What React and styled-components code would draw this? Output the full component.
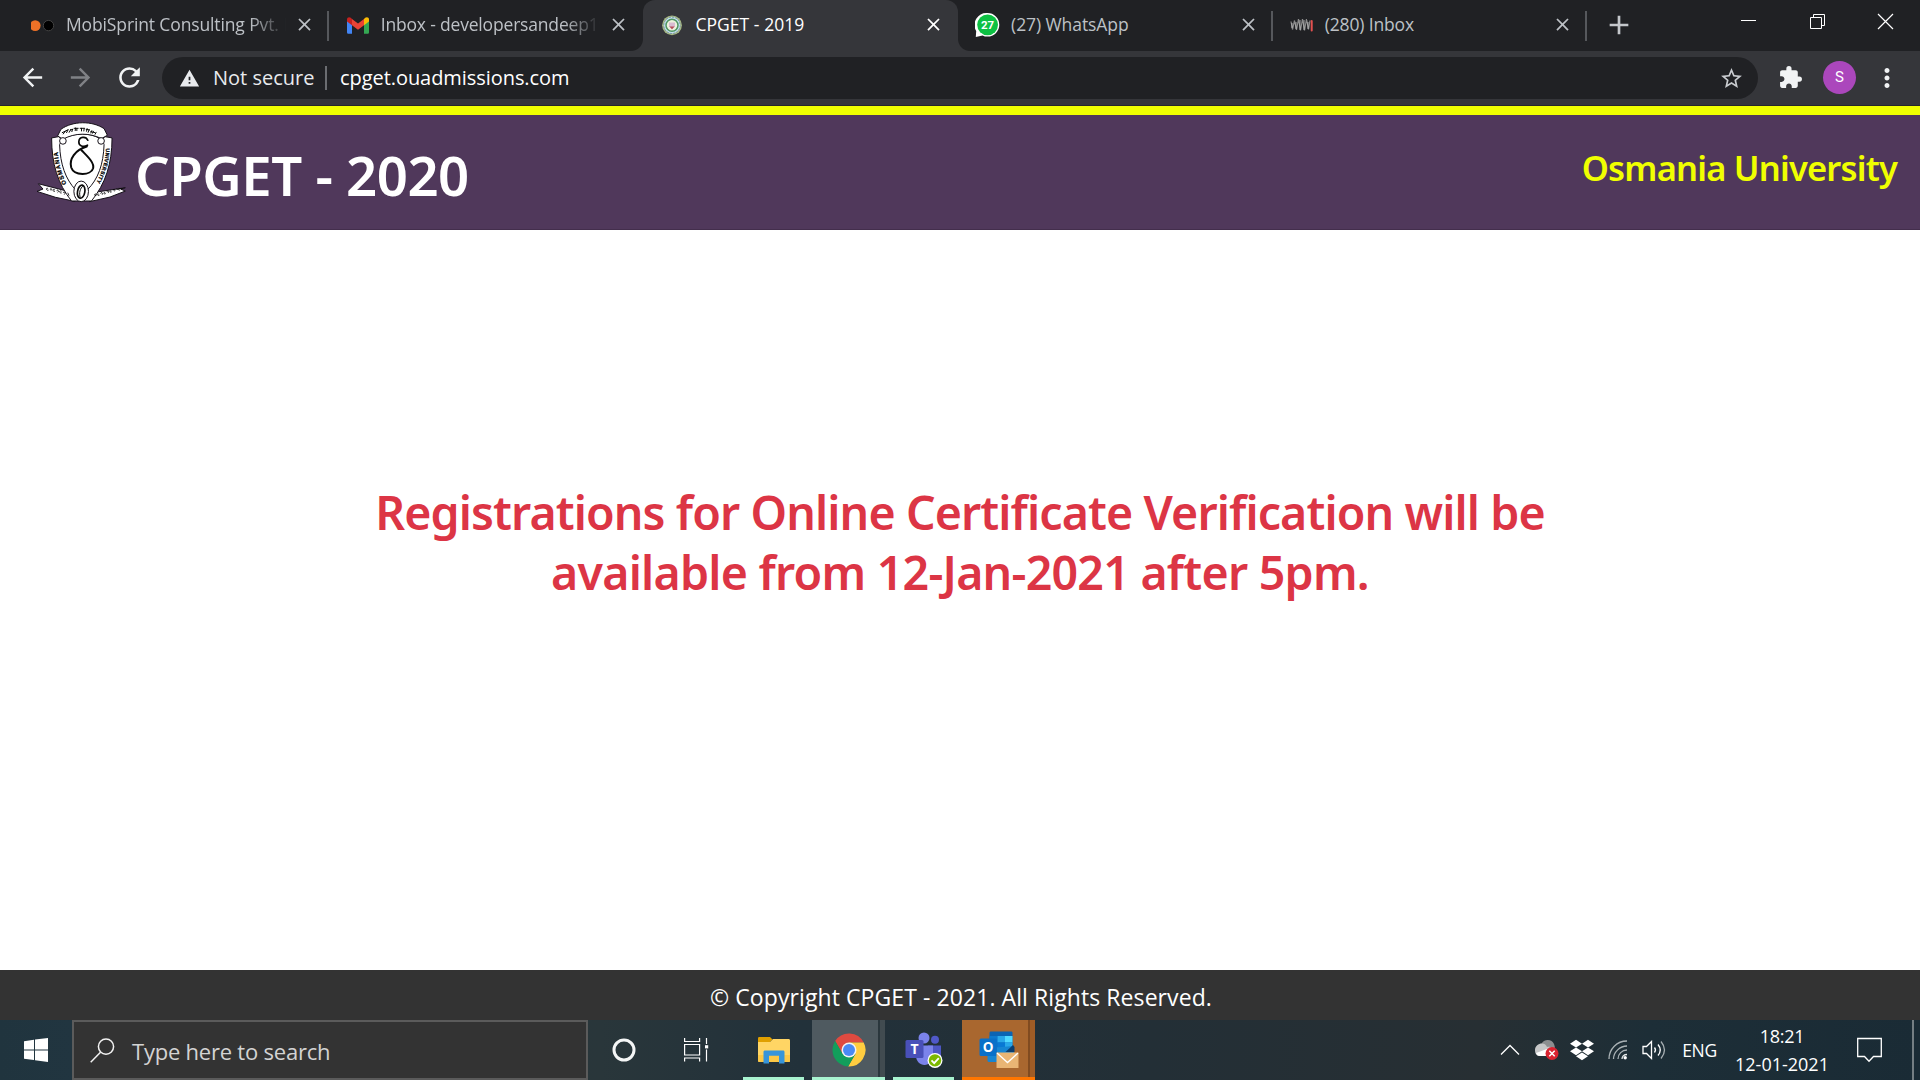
import React from 'react';
import styled, { createGlobalStyle, css } from 'styled-components';
import {
  MdAdd, MdArrowBack, MdArrowForward, MdClose, MdExtension,
  MdMoreVert, MdRefresh, MdStarBorder, MdWarning,
} from 'react-icons/md';
import { FaDropbox } from 'react-icons/fa';

const GlobalStyle = createGlobalStyle`
  * { box-sizing: border-box; }
  html, body { margin: 0; padding: 0; overflow: hidden; }
  body { font-family: 'Open Sans', 'Noto Sans', sans-serif; background: #fff; }
  svg { display: block; flex: none; }
`;

const Screen = styled.div`
  display: flex;
  flex-direction: column;
  width: 1920px;
  height: 1080px;
  overflow: hidden;
`;

/* ---------- browser tabs ---------- */

const TabStrip = styled.div`
  display: flex;
  height: 51px;
  padding-left: 14px;
  background: #202124;
`;

const Tab = styled.div`
  position: relative;
  display: flex;
  align-items: center;
  width: 314.7px;
  height: 51px;
  padding: 0 0 2px 17px;
  color: ${(p) => (p.$active ? '#fff' : '#bdc1c6')};
  ${(p) => p.$active && css`
    background: #35363a;
    border-radius: 12px 12px 0 0;
    &::before, &::after {
      content: '';
      position: absolute;
      bottom: 0;
      width: 12px;
      height: 12px;
    }
    &::before {
      left: -12px;
      background: radial-gradient(circle at 0 0, transparent 11.5px, #35363a 12.5px);
    }
    &::after {
      right: -12px;
      background: radial-gradient(circle at 100% 0, transparent 11.5px, #35363a 12.5px);
    }
  `}
`;

const TabTitle = styled.span`
  flex: 1;
  min-width: 0;
  margin: 0 8px 1px 11px;
  overflow: hidden;
  white-space: nowrap;
  font-size: 17.5px;
  line-height: 30px;
  letter-spacing: ${(p) => p.$tracking}px;
  ${(p) => p.$fade && css`
    mask-image: linear-gradient(90deg, #000 calc(100% - 36px), transparent 100%);
  `}
`;

const TabDivider = styled.span`
  width: 2px;
  height: 30px;
  margin: 2px 0 0 12px;
  background: ${(p) => (p.$hidden ? 'transparent' : '#56585c')};
`;

const NewTab = styled.div`
  display: flex;
  align-items: center;
  width: 66px;
  padding: 0 0 1px 16px;
  color: #c4c7cb;
`;

const WindowControls = styled.div`
  display: flex;
  align-items: flex-start;
  justify-content: space-between;
  width: 153px;
  margin: 13px 26px 0 auto;
`;

/* ---------- browser toolbar ---------- */

const Toolbar = styled.div`
  display: flex;
  align-items: center;
  height: 55px;
  padding-bottom: 1px;
  background: #35363a;
  border-bottom: 1px solid #26272a;
`;

const NavButtons = styled.div`
  display: flex;
  align-items: center;
  width: 162px;
  padding-left: 18px;
  gap: 19px;
  color: #f1f3f4;
`;

const Dimmed = styled.span`
  color: #808286;
`;

const AddressBar = styled.div`
  display: flex;
  align-items: center;
  width: 1596px;
  height: 42px;
  padding: 1px 14px 0 17px;
  border-radius: 21px;
  background: #202124;
  color: #e8eaed;
  font-size: 20px;
  line-height: 28px;
  white-space: nowrap;
`;

const SecurityLabel = styled.span`
  width: 101px;
  margin-left: 13px;
`;

const AddressDivider = styled.span`
  width: 2px;
  height: 24px;
  margin: 0 13px 0 11px;
  background: #6b6d71;
`;

const Url = styled.span`
  flex: 1;
  color: #fff;
  letter-spacing: -0.06px;
`;

const StarSlot = styled.span`
  color: #c9ccd0;
`;

const ToolbarActions = styled.div`
  display: flex;
  flex: 1;
  align-items: center;
  padding-left: 20px;
  color: #f1f3f4;
`;

const Avatar = styled.span`
  width: 33px;
  height: 33px;
  margin: 0 15.5px 0 20px;
  border-radius: 50%;
  background: #ab47bc;
  color: #fff;
  font-family: Roboto, sans-serif;
  font-size: 15px;
  line-height: 33px;
  text-align: center;
`;

/* ---------- web page ---------- */

const SiteHeader = styled.header`
  display: flex;
  align-items: flex-start;
  height: 124px;
  padding: 7px 23px 0 36px;
  border-top: 9px solid #f0ff00;
  border-bottom: 1px solid #432e4c;
  background: #50385b;
  font-family: 'Noto Sans', sans-serif;
  font-weight: 600;
`;

const SiteTitle = styled.h1`
  margin: 18px 0 0 8px;
  color: #fff;
  font-size: 54.5px;
  font-weight: 600;
  line-height: 70px;
  letter-spacing: -0.5px;
`;

const University = styled.span`
  margin: 25px 0 0 auto;
  color: #f0ff00;
  font-size: 34.5px;
  line-height: 41px;
  letter-spacing: -0.8px;
`;

const Content = styled.main`
  flex: 1;
  padding-top: 252px;
  background: #fff;
  color: #dc3545;
  font-family: 'Noto Sans', sans-serif;
  text-align: center;
`;

const NoticeLine = styled.div`
  font-size: 46.5px;
  font-weight: 600;
  line-height: 60px;
  letter-spacing: ${(p) => p.$tracking}px;
`;

const Footer = styled.footer`
  height: 50px;
  padding: 2px 0 0 2px;
  background: #333;
  color: #fff;
  font-size: 23px;
  line-height: 50px;
  letter-spacing: 0.08px;
  text-align: center;
`;

/* ---------- taskbar ---------- */

const Taskbar = styled.div`
  display: flex;
  height: 60px;
  background: linear-gradient(90deg, #20343e 0, #213540 72px, #29363a 600px, #22313a 800px, #232f36 1150px, #272f33 1480px, #1d2e37 1650px, #1a2b35 1920px);
  color: #fff;
`;

const TaskSlot = styled.div`
  display: flex;
  align-items: center;
  justify-content: center;
  width: 72px;
`;

const SearchBox = styled.div`
  display: flex;
  align-items: center;
  width: 516px;
  padding-left: 16px;
  border: 2px solid #5b5b5b;
  background: #333;
  color: #d3d3d3;
  font-size: 22px;
  line-height: 30px;
  letter-spacing: -0.22px;
`;

const SearchText = styled.span`
  margin: 1px 0 0 17px;
`;

const AppButton = styled.div`
  display: flex;
  align-items: center;
  justify-content: center;
  width: ${(p) => p.$width}px;
  margin-left: ${(p) => p.$gap}px;
  padding-top: 3px;
  border-bottom: 3px solid ${(p) => p.$line};
  background: ${(p) => p.$fill || 'none'};
`;

const Tray = styled.div`
  display: flex;
  align-items: center;
  margin-left: auto;
`;

const TrayItem = styled.span`
  display: flex;
  justify-content: center;
  width: ${(p) => p.$width}px;
  font-size: 17.5px;
  letter-spacing: -0.3px;
`;

const Clock = styled.div`
  display: flex;
  flex-direction: column;
  align-items: center;
  width: 110px;
  font-size: 18px;
  line-height: 28px;
`;

const ClockTime = styled.span`
  letter-spacing: -0.28px;
`;

const DesktopEdge = styled.span`
  align-self: stretch;
  width: 2px;
  margin: 0 6px 0 11px;
  background: #747e83;
`;

/* ---------- favicons ---------- */

const DotsFavicon = () => (
  <svg width="24" height="24" viewBox="0 0 24 24">
    <circle cx="4.2" cy="12.6" r="5.4" fill="#ed7127" />
    <circle cx="17.5" cy="12.6" r="5.2" fill="#000" stroke="#424242" strokeWidth="1" />
  </svg>
);

const GmailFavicon = () => (
  <svg width="24" height="24" viewBox="0 0 24 24">
    <path d="M1 7v12.200c0 1 .7 1.600 1.600 1.600H6V10.500z" fill="#4285f4" />
    <path d="M23 7v12.200c0 1-.7 1.600-1.600 1.600H18V10.500z" fill="#34a853" />
    <path d="M18 6v6.200l5-3.800V6.600c0-2.300-2.200-3-3.800-1.800z" fill="#fbbc04" />
    <path d="M6 12.200V6l6 4.500L18 6v6.200l-6 4.600z" fill="#ea4335" />
    <path d="M1 6.600v1.800l5 3.800V6L4.800 4.800C3.200 3.600 1 4.300 1 6.600z" fill="#c5221f" />
  </svg>
);

const CollegeFavicon = () => (
  <svg width="24" height="24" viewBox="0 0 24 24">
    <circle cx="12" cy="12.3" r="9.9" fill="#a7b884" />
    <circle cx="12" cy="12.3" r="8.2" fill="#c5e1ef" stroke="#7896aa" strokeDasharray="2 1.2" />
    <circle cx="12" cy="12.3" r="6" fill="#edf2dc" stroke="#4e9562" strokeWidth="1.5" />
    <path d="M9 9.5h6v4l-3 3-3-3z" fill="#d9bcd2" />
    <path d="M9.4 13.5h5.2L12 16.3z" fill="#b64f56" />
  </svg>
);

const WhatsAppFavicon = () => (
  <svg width="25" height="26" viewBox="0 0 25 26">
    <path d="M12.5 1a11.8 11.8 0 0 1 0 23.6c-2 0-3.4-.4-4.9-1.2L.8 25l.4-6A12 12 0 0 1 12.5 1z" fill="#fff" />
    <circle cx="12.6" cy="12.8" r="10.4" fill="#0dc143" />
    <text x="12.5" y="17" textAnchor="middle" fontFamily="Roboto, sans-serif" fontSize="11.5" fontWeight="700" fill="#fff">27</text>
  </svg>
);

const WaveFavicon = () => (
  <svg width="24" height="24" viewBox="0 0 24 24">
    <path d="M1 8.500l1.500 8 2-9 2 9.500 2-11 2 11.500 2-11.500 2 11.500 2-11.500 2 10.500 1.500-9" fill="none" stroke="#8b8b8b" strokeWidth="1.200" />
    <path d="M2 10v5M6 9v7M10 7v10M14 7v10M18 9v7" stroke="#c4c4c4" strokeWidth=".8" />
    <path d="M21.700 8v9.500" stroke="#e2504f" strokeWidth="2" strokeLinecap="round" />
  </svg>
);

/* ---------- university crest ---------- */

const Crest = () => (
  <svg width="91" height="81" viewBox="18 36 272 244">
    <g fill="#fff" stroke="#151018" strokeWidth="3" strokeLinejoin="round">
      <path d="M24 222l102 26 8 27-58-12-56-18 18-7z" />
      <path d="M286 234l-94 14-14 28 62-14 46-18-14-6z" />
      <path d="M64 84l22-4 12 16h114l12-16 22 4c0 78-20 138-62 190h-60C82 222 64 160 64 84z" />
      <path d="M88 104c2-10 14-10 16-20 30-16 74-16 102 0 2 10 16 10 16 20-2 60-18 104-50 136h-36C106 208 90 164 88 104z" />
      <path d="M82 78l10-20c36-26 94-26 130-2l10 20-18 10c-36-18-80-18-116 2z" />
      <circle cx="98" cy="93" r="10" />
      <circle cx="213" cy="93" r="10" />
      <ellipse cx="153" cy="245" rx="22" ry="31" />
    </g>
    <g fill="none" stroke="#090909" strokeLinecap="round">
      <path d="M173 91c-6-13-26-11-27 4-1 13 13 18 26 11" strokeWidth="5" />
      <path d="M170 110c-35 10-54 38-47 63 9 26 60 25 66 2 4-17-17-35-35-54" strokeWidth="6" />
      <ellipse cx="153" cy="246" rx="11" ry="20" strokeWidth="5" transform="rotate(10 153 246)" />
      <path d="M159 228c-10 8-13 22-9 35" strokeWidth="3" />
      <path d="M96 68l16-8m-13 12l6-8m4 4l5-9m3 8l5-9m-1 2l7-2m-3 7l2-7m8 4l1-8m-4 1h12m-4 7v-6m10-1h13m-9 8v-8m7 8l1-7m7 8l2-8m-3 2l10 2m-4 7l3-8m5 10l3-7m-3 3l12 3m-7 2l3-6m5 9l3-6" strokeWidth="3" />
      <path d="M53 237c-5-6-8 5 0 5m7-3c0-7 8 0 3 3m10-2c-7-5-7 7 0 5m7-2c0-7 9 2 3 5m10-4c-7-4-7 7 0 6m7-2c0-7 8 2 3 6m10-4l3 7" strokeWidth="2.5" />
      <path d="M193 256c0-6 7-4 5 1m7-4c-6-2-3 7 2 4m5-6c0-6 8-2 5 3m7-6c-6 0-3 7 2 4m5-6c1-6 8-1 4 3m7-6c-5 1-2 7 2 4m6-6c0-6 7-1 4 3m6-6l9 3m-2-5l9 1" strokeWidth="2.5" />
    </g>
    <path id="crest-left" d="M109 222Q84 172 82 116" fill="none" />
    <path id="crest-right" d="M228 115Q226 172 194 226" fill="none" />
    <g fill="#000" stroke="#000" strokeWidth=".8" fontFamily="Liberation Sans, sans-serif" fontWeight="700">
      <text fontSize="18" textLength="100"><textPath href="#crest-left">OSMANIA</textPath></text>
      <text fontSize="16" textLength="108"><textPath href="#crest-right">UNIVERSITY</textPath></text>
    </g>
  </svg>
);

/* ---------- window and taskbar icons ---------- */

const MinimizeIcon = () => (
  <svg width="16" height="16" viewBox="0 0 16 16"><path d="M0 7.5h15" stroke="#fff" /></svg>
);

const RestoreIcon = () => (
  <svg width="17" height="17" viewBox="0 0 17 17" fill="none" stroke="#fff">
    <path d="M1.5 4.5h11v11h-11zM4.5 4.5v-3h11v11h-3" />
  </svg>
);

const CloseWindowIcon = () => (
  <svg width="17" height="17" viewBox="0 0 17 17"><path d="M1 1l15 15M16 1L1 16" stroke="#fff" strokeWidth="1.2" /></svg>
);

const WindowsIcon = () => (
  <svg width="24" height="24" viewBox="0 0 24 24" fill="#fff">
    <path d="M0 3.3l10-1.5v9.6H0zM11 1.6L24 0v11.4H11zM0 12.4h10V22L0 20.8zM11 12.4h13V24l-13-1.8z" />
  </svg>
);

const SearchIcon = () => (
  <svg width="25" height="25" viewBox="0 0 25 25" fill="none" stroke="#f2f2f2" strokeWidth="1.5">
    <circle cx="16" cy="8.6" r="7.6" /><path d="M10.5 14.2L.7 24.2" />
  </svg>
);

const CortanaIcon = () => (
  <svg width="26" height="26" viewBox="0 0 26 26"><circle cx="13" cy="13" r="10" fill="none" stroke="#f4f6f6" strokeWidth="3" /></svg>
);

const TaskViewIcon = () => (
  <svg width="25" height="24" viewBox="0 0 25 24" fill="none" stroke="#fff" strokeWidth="1.2">
    <path d="M.6 0v3.500h15V0M.6 6.500h15v10.500H.6zM.6 23.500V20h15v3.500M22.500 0v6M22.500 11.500v12" />
    <path d="M21 7.200h3.200v3.200H21z" fill="#fff" stroke="none" />
  </svg>
);

const ExplorerIcon = () => (
  <svg width="34" height="30" viewBox="0 0 34 30">
    <path d="M1 3.5C1 2.3 1.7 2 2.6 2H13l2.5 2.4L13 7H1z" fill="#e0a000" />
    <path d="M1 7h12l3-3h15.5c1 0 1.5.6 1.5 1.5v20c0 1-.6 1.5-1.5 1.5h-29C1.5 27 1 26.4 1 25.5z" fill="#ffd564" />
    <path d="M1 20h32v5.5c0 1-.6 1.5-1.5 1.5h-29C1.5 27 1 26.4 1 25.5z" fill="#fcc846" />
    <path d="M6.5 17c0-1 .6-1.5 1.5-1.5h18c1 0 1.5.6 1.5 1.5v11.5H22v-7.700H12v7.700H6.500z" fill="#3795da" />
  </svg>
);

const ChromeIcon = () => (
  <svg width="36" height="36" viewBox="0 0 48 48">
    <path d="M24 14h19.6A22 22 0 0 0 5.54 12.03L15.34 29z" fill="#df4a40" />
    <path d="M43.6 14A22 22 0 0 1 22.86 45.97L32.66 29 24 14z" fill="#ffcd40" />
    <path d="M22.86 45.97A22 22 0 0 1 5.54 12.03L15.34 29h17.32z" fill="#129e5b" />
    <circle cx="24" cy="24" r="10" fill="#f3f3f3" />
    <circle cx="24" cy="24" r="8" fill="#4a8af4" />
  </svg>
);

const TeamsIcon = () => (
  <svg width="38" height="36" viewBox="0 0 38 36">
    <circle cx="30" cy="7.7" r="4" fill="#5059c9" />
    <path d="M23 13.5h13v10c0 4-3 6.5-6.5 6.5S23 27 23 23.5z" fill="#4e57c4" />
    <circle cx="19" cy="6" r="5.5" fill="#7b83eb" />
    <path d="M11 13.5h17V24c0 5-4 9-8.5 9S11 29 11 24z" fill="#7b83eb" />
    <rect x=".5" y="8" width="18" height="18" rx="1.5" fill="#4950b9" />
    <text x="9.5" y="22" textAnchor="middle" fontFamily="Open Sans, sans-serif" fontSize="14" fontWeight="700" fill="#fff">T</text>
    <circle cx="30" cy="28.4" r="7.5" fill="#fff" />
    <circle cx="30" cy="28.4" r="6.2" fill="#7cb900" />
    <path d="M26.5 28.4l2.7 2.8 4.6-5" fill="none" stroke="#fff" strokeWidth="1.8" />
  </svg>
);

const OutlookIcon = () => (
  <svg width="40" height="38" viewBox="0 0 40 38">
    <path d="M10.5 2c0-1 .5-1.5 1.5-1.5h20c1 0 1.5.5 1.5 1.5v15h-23z" fill="#0b64b4" />
    <path d="M10.5 5h8v13h-8z" fill="#0b7ad0" />
    <path d="M18.5 5H26v6.5h-7.5z" fill="#28a8ea" />
    <path d="M26 5h7.5v6.5H26z" fill="#50d9ff" />
    <path d="M18.5 11.5H26V18h-7.5z" fill="#0878d4" />
    <path d="M26 11.5h7.5V18H26z" fill="#28a8ea" />
    <path d="M8.500 17L35 15v16H10c-1 0-1.500-.7-1.500-1.500z" fill="#1685d2" />
    <path d="M34 14l1.500 2v5h-9z" fill="#0c3f70" />
    <rect x=".5" y="7.500" width="17.500" height="17.500" rx="1.500" fill="#0870c9" />
    <text x="9.200" y="21.300" textAnchor="middle" fontFamily="Open Sans, sans-serif" fontSize="13.500" fontWeight="700" fill="#fff">O</text>
    <path d="M17.500 21.500h22V37h-22z" fill="#e9b574" />
    <path d="M18 22l10.500 9.500L39 22" fill="none" stroke="#fff" strokeWidth="1.300" />
  </svg>
);

const ChevronIcon = () => (
  <svg width="20" height="12" viewBox="0 0 20 12"><path d="M1 10.5l9-9 9 9" fill="none" stroke="#fff" strokeWidth="1.3" /></svg>
);

const CloudIcon = () => (
  <svg width="25" height="22" viewBox="0 0 25 22">
    <path d="M7 6a7 7 0 0 1 13-1c1.500 3 1 7-1 9H9z" fill="#8c8e90" />
    <path d="M1 11c0-7 10-9 12-3 4-1 8 2 8 6 0 2-1 3-3 3H6c-3 0-5-2-5-6z" fill="#c6c7c8" />
    <path d="M2 14l11-4 6 7H6c-2 0-3.500-1-4-3z" fill="#fff" />
    <circle cx="18" cy="14.5" r="6.5" fill="#da2330" />
    <path d="M15.300 11.800l5.400 5.400m0-5.400l-5.400 5.400" stroke="#fff" strokeWidth="1.5" />
  </svg>
);

const WifiIcon = () => (
  <svg width="20" height="20" viewBox="0 0 20 20" fill="none" stroke="#aab2b5" strokeWidth="1.3">
    <path d="M1 19C1 9 9 1 19 1M5.500 19C5.500 12 12 6 19 6M10 19c0-5 4-9 9-9" />
    <path d="M14 19c0-2.500 2-4.500 5-4.500" stroke="#e5e8e9" />
    <circle cx="17.2" cy="17.8" r="1.7" fill="#fff" stroke="none" />
  </svg>
);

const SpeakerIcon = () => (
  <svg width="24" height="20" viewBox="0 0 24 20" fill="none" stroke="#fff" strokeWidth="1.3">
    <path d="M1 6.500h3.500L9.500 1.500v17l-5-5H1z" />
    <path d="M12.500 7.500q2 2.500 0 5M16 4.500q4.500 5.500 0 11" />
    <path d="M19 1.500q7 8.500 0 17" stroke="#a6aeb2" />
  </svg>
);

const ActionCenterIcon = () => (
  <svg width="25" height="26" viewBox="0 0 25 26"><path d="M.7 1.500h23.600v18H16.500L12 24.200l-4.500-4.700H.7z" fill="none" stroke="#fff" strokeWidth="1.3" /></svg>
);

const tabs = [
  { title: 'MobiSprint Consulting Pvt. L', Icon: DotsFavicon, tracking: -0.13, fade: true },
  { title: 'Inbox - developersandeep19', Icon: GmailFavicon, tracking: -0.18, fade: true, bare: true },
  { title: 'CPGET - 2019', Icon: CollegeFavicon, tracking: 0.05, active: true, bare: true },
  { title: '(27) WhatsApp', Icon: WhatsAppFavicon, tracking: -0.08 },
  { title: '(280) Inbox', Icon: WaveFavicon, tracking: -0.15 },
];

const chromeFill = 'linear-gradient(90deg, #4f5a60 66px, #2b373d 66px, #2b373d 68px, #414b50 68px)';
const outlookFill = 'linear-gradient(90deg, #a9672f 66px, #814b20 66px, #814b20 68px, #9f5c26 68px)';

export default function App() {
  return (
    <Screen>
      <GlobalStyle />
      <TabStrip>
        {tabs.map(({ title, Icon, tracking, fade, active, bare }) => (
          <Tab key={title} $active={active}>
            <Icon />
            <TabTitle $tracking={tracking} $fade={fade}>{title}</TabTitle>
            <MdClose size={21} />
            <TabDivider $hidden={bare} />
          </Tab>
        ))}
        <NewTab><MdAdd size={32} /></NewTab>
        <WindowControls>
          <MinimizeIcon />
          <RestoreIcon />
          <CloseWindowIcon />
        </WindowControls>
      </TabStrip>

      <Toolbar>
        <NavButtons>
          <MdArrowBack size={29} />
          <Dimmed><MdArrowForward size={29} /></Dimmed>
          <MdRefresh size={31} />
        </NavButtons>
        <AddressBar>
          <MdWarning size={21} />
          <SecurityLabel>Not secure</SecurityLabel>
          <AddressDivider />
          <Url>cpget.ouadmissions.com</Url>
          <StarSlot><MdStarBorder size={25} /></StarSlot>
        </AddressBar>
        <ToolbarActions>
          <MdExtension size={25} />
          <Avatar>S</Avatar>
          <MdMoreVert size={30} />
        </ToolbarActions>
      </Toolbar>

      <SiteHeader>
        <Crest />
        <SiteTitle>CPGET - 2020</SiteTitle>
        <University>Osmania University</University>
      </SiteHeader>
      <Content>
        <NoticeLine $tracking={-0.88}>Registrations for Online Certificate Verification will be</NoticeLine>
        <NoticeLine $tracking={-0.75}>available from 12-Jan-2021 after 5pm.</NoticeLine>
      </Content>
      <Footer>© Copyright CPGET - 2021. All Rights Reserved.</Footer>

      <Taskbar>
        <TaskSlot><WindowsIcon /></TaskSlot>
        <SearchBox>
          <SearchIcon />
          <SearchText>Type here to search</SearchText>
        </SearchBox>
        <TaskSlot><CortanaIcon /></TaskSlot>
        <TaskSlot><TaskViewIcon /></TaskSlot>
        <AppButton $width={61} $gap={11} $line="#a8f3d0"><ExplorerIcon /></AppButton>
        <AppButton $width={73} $gap={8} $line="#a8f3d0" $fill={chromeFill}><ChromeIcon /></AppButton>
        <AppButton $width={61} $gap={8} $line="#a8f3d0"><TeamsIcon /></AppButton>
        <AppButton $width={73} $gap={8} $line="#ff7600" $fill={outlookFill}><OutlookIcon /></AppButton>
        <Tray>
          <TrayItem $width={36}><ChevronIcon /></TrayItem>
          <TrayItem $width={36}><CloudIcon /></TrayItem>
          <TrayItem $width={36}><FaDropbox size={24} /></TrayItem>
          <TrayItem $width={36}><WifiIcon /></TrayItem>
          <TrayItem $width={36}><SpeakerIcon /></TrayItem>
          <TrayItem $width={55}>ENG</TrayItem>
          <Clock>
            <ClockTime>18:21</ClockTime>
            <span>12-01-2021</span>
          </Clock>
          <TrayItem $width={64}><ActionCenterIcon /></TrayItem>
          <DesktopEdge />
        </Tray>
      </Taskbar>
    </Screen>
  );
}
